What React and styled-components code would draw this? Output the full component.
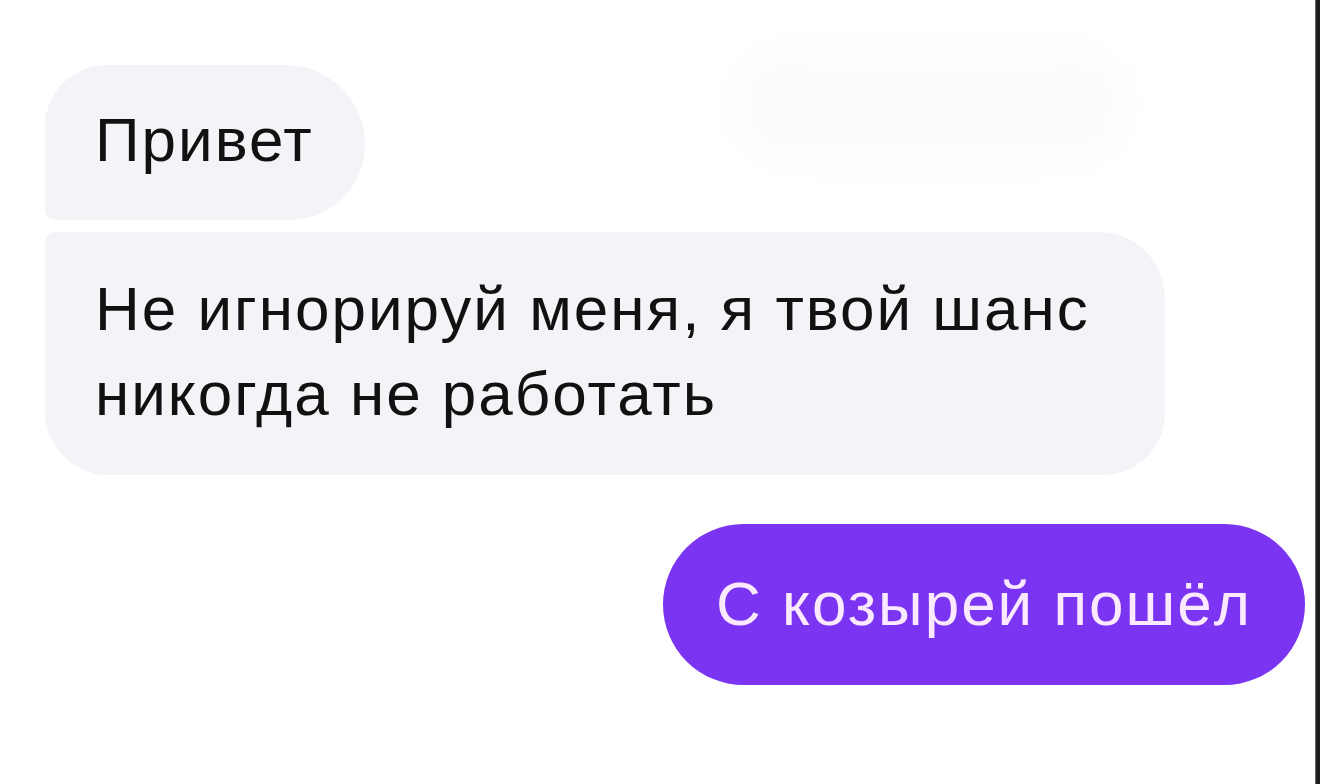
import React from "react";
import styled, { createGlobalStyle } from "styled-components";

const GlobalStyle = createGlobalStyle`
  html, body {
    margin: 0;
    padding: 0;
    background: #ffffff;
  }
  body {
    font-family: "Liberation Sans", Arial, sans-serif;
  }
`;

const Screen = styled.div`
  position: relative;
  display: flex;
  flex-direction: row;
  width: 1320px;
  height: 784px;
  overflow: hidden;
  background: #ffffff;
`;

const Chat = styled.div`
  flex: 1;
  display: flex;
  flex-direction: column;
  padding: 65px 10px 0 45px;
`;

const EdgeStrip = styled.div`
  width: 5px;
  background: #1d1d1f;
  border-left: 1px solid #6b6b6e;
  box-sizing: border-box;
`;

const Bubble = styled.div`
  box-sizing: border-box;
  display: flex;
  align-items: center;
  height: ${(p) => p.$height}px;
  padding: 0 ${(p) => p.$padRight}px 6px 50px;
  font-size: 62px;
  line-height: 85px;
  letter-spacing: 2px;
  color: #111111;
  background: #f3f4f7;
  border-radius: ${(p) => p.$radius};
  margin-top: ${(p) => p.$gap || 0}px;
`;

const IncomingBubble = styled(Bubble)`
  align-self: flex-start;
`;

const WideBubble = styled(IncomingBubble)`
  width: 1120px;
`;

const OutgoingBubble = styled(Bubble)`
  align-self: flex-end;
  justify-content: center;
  padding: 0 0 2px 0;
  width: 642px;
  color: #fbeaff;
  background: #7b34f1;
  border-radius: 81px;
`;

const Smudge = styled.div`
  position: absolute;
  left: 730px;
  top: 45px;
  width: 400px;
  height: 120px;
  border-radius: 60px;
  background: #fcfcfd;
  filter: blur(14px);
`;

export default function App() {
  return (
    <>
      <GlobalStyle />
      <Screen>
        <Smudge />
        <Chat>
          <IncomingBubble $height={155} $padRight={51} $radius="62px 80px 76px 10px">
            Привет
          </IncomingBubble>
          <WideBubble $gap={12} $height={243} $padRight={60} $radius="10px 66px 62px 64px">
            Не игнорируй меня, я твой шанс никогда не работать
          </WideBubble>
          <OutgoingBubble $gap={49} $height={161}>
            С козырей пошёл
          </OutgoingBubble>
        </Chat>
        <EdgeStrip />
      </Screen>
    </>
  );
}
